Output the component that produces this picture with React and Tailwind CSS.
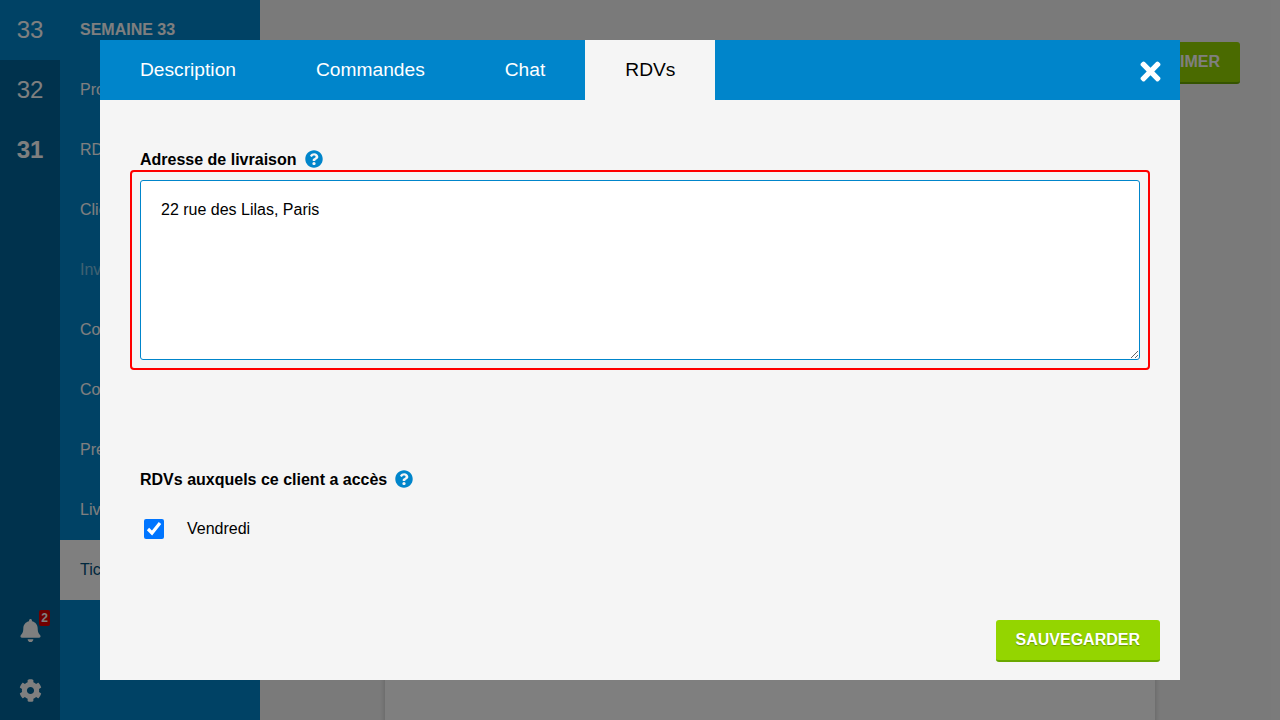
import { FaBell, FaCog, FaQuestionCircle, FaTimes } from 'react-icons/fa';

const weeks = [
  { label: '32', className: 'font-normal' },
  { label: '31', className: 'font-bold' },
];

const navItems = ['Produits', 'RDVs', 'Clients', 'Invitations', 'Commandes', 'Contacts', 'Présentation', 'Livraisons', 'Tickets'];

const tabs = ['Description', 'Commandes', 'Chat', 'RDVs'];

function Sidebar() {
  return (
    <aside className="flex w-[260px] h-full shrink-0 bg-[#0085cb]">
      <div className="flex flex-col w-[60px] h-full">
        <div className="flex items-center justify-center h-[60px] text-[24px] text-white">33</div>
        <div className="flex flex-col flex-1 bg-[#00659b]">
          {weeks.map(week => (
            <div key={week.label} className={`flex items-center justify-center h-[60px] text-[24px] text-white ${week.className}`}>
              {week.label}
            </div>
          ))}
          <div className="relative flex items-center justify-center h-[60px] mt-auto text-white">
            <FaBell size={23} />
            <span className="absolute left-[39px] top-[10px] w-[11px] h-[16px] rounded-[2px] bg-[#e00000] text-[12px] leading-[16px] font-bold text-center">2</span>
          </div>
          <div className="flex items-center justify-center h-[60px] text-white">
            <FaCog size={23} />
          </div>
        </div>
      </div>
      <nav className="flex flex-col flex-1 text-white">
        <div className="flex items-center h-[60px] pl-5 text-base font-bold">SEMAINE 33</div>
        {navItems.map(item => (
          <div
            key={item}
            className={`flex items-center h-[60px] pl-5 text-base ${item === 'Tickets' ? 'bg-white text-[#00507c]' : ''} ${item === 'Invitations' ? 'text-white/50' : ''}`}
          >
            {item}
          </div>
        ))}
      </nav>
    </aside>
  );
}

function Page() {
  return (
    <main className="flex-1 h-full overflow-hidden bg-[#f5f5f5]">
      <div className="flex justify-end pt-[42px] pr-10">
        <button className="h-[42px] px-5 rounded-[3px] bg-[#94d500] border-b-2 border-[#6aa800] text-base font-bold text-white">
          SUPPRIMER
        </button>
      </div>
      <div className="h-[720px] w-[770px] ml-[125px] mt-[500px] bg-white shadow-[0_0_6px_rgba(0,0,0,0.2)]" />
    </main>
  );
}

function HelpIcon() {
  return <FaQuestionCircle size={18} className="-translate-y-px text-[#0085cb]" />;
}

function Modal() {
  return (
    <div className="absolute inset-0 flex items-start justify-center pt-10 bg-black/50">
      <div className="flex flex-col w-[1080px] h-[640px] bg-[#f5f5f5]">
        <div className="flex items-stretch h-[60px] bg-[#0085cb]">
          {tabs.map(tab => (
            <div
              key={tab}
              className={`flex items-center px-10 text-[19.2px] ${tab === 'RDVs' ? 'bg-[#f5f5f5] text-black' : 'text-white'}`}
            >
              {tab}
            </div>
          ))}
          <div className="flex items-center ml-auto pr-[15px] pt-[2px] text-white">
            <FaTimes size={29} />
          </div>
        </div>

        <div className="flex flex-col flex-1 px-10 pt-[50px]">
          <div className="flex items-center gap-2 h-[19px] text-base font-bold text-black">
            Adresse de livraison
            <HelpIcon />
          </div>
          <div className="-mx-2.5 mt-[1px] p-2 border-2 border-[#ff0000] rounded-[4px]">
            <textarea
              className="block w-full h-[180px] px-5 py-[18px] border border-[#0085cb] rounded-[3px] bg-white text-base leading-[22px] text-black outline-none"
              defaultValue="22 rue des Lilas, Paris"
            />
          </div>

          <div className="flex items-center gap-2 h-[19px] mt-[100px] text-base font-bold text-black">
            RDVs auxquels ce client a accès
            <HelpIcon />
          </div>
          <label className="flex items-center gap-[23px] mt-[28px] pl-1 text-base text-black">
            <input type="checkbox" defaultChecked className="w-5 h-5 m-0" />
            Vendredi
          </label>

          <div className="flex justify-end mt-auto -mr-5 mb-[18px]">
            <button className="h-[42px] px-5 rounded-[3px] bg-[#94d500] border-b-2 border-[#6aa800] text-base font-bold text-white [text-shadow:0_1px_1px_rgba(0,0,0,0.3)]">
              SAUVEGARDER
            </button>
          </div>
        </div>
      </div>
    </div>
  );
}

export default function App() {
  return (
    <div className="relative flex h-[720px] w-[1280px] overflow-hidden font-['Liberation_Sans',Arial,sans-serif]">
      <Sidebar />
      <Page />
      <Modal />
    </div>
  );
}
